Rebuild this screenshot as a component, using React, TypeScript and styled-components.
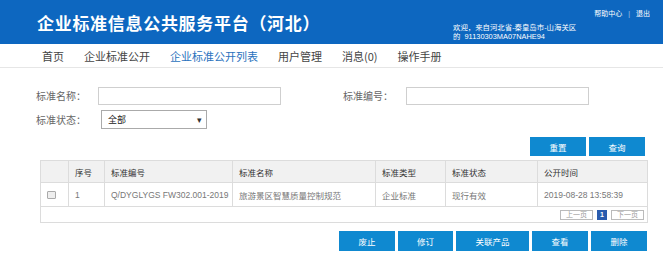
import * as React from 'react';
import styled, { createGlobalStyle } from 'styled-components';

const colors = {
  brand: '#0d67c0',
  button: '#0f89d0',
  border: '#dcdcdc',
  text: '#333',
  muted: '#777',
  active: '#2a72bd'
};

const cjk = `"Liberation Sans", "Noto Sans CJK SC", sans-serif`;

const GlobalStyle = createGlobalStyle`
  html, body {
    margin: 0;
    padding: 0;
    background: #fff;
    font-family: ${cjk};
  }
`;

const navItems = ['首页', '企业标准公开', '企业标准公开列表', '用户管理', '消息(0)', '操作手册'];

const columns = [
  { key: 'check', title: '', width: 28 },
  { key: 'no', title: '序号', width: 36 },
  { key: 'code', title: '标准编号', width: 128 },
  { key: 'name', title: '标准名称', width: 143 },
  { key: 'type', title: '标准类型', width: 70 },
  { key: 'status', title: '标准状态', width: 92 },
  { key: 'time', title: '公开时间', width: 110 }
];

const row = {
  no: '1',
  code: 'Q/DYGLYGS FW302.001-2019',
  name: '旅游景区智慧质量控制规范',
  type: '企业标准',
  status: '现行有效',
  time: '2019-08-28 13:58:39'
};

const actions = [
  { label: '废止', width: 56 },
  { label: '修订', width: 55 },
  { label: '关联产品', width: 73 },
  { label: '查看', width: 56 },
  { label: '删除', width: 56 }
];

const App: React.FC = () => (
  <Page>
    <GlobalStyle />
    <Header>
      <Title>企业标准信息公共服务平台（河北）</Title>
      <HeaderRight>
        <HelpLinks>
          <span>帮助中心</span>
          <Sep>|</Sep>
          <span>退出</span>
        </HelpLinks>
        <Welcome>
          <div>欢迎，来自河北省-秦皇岛市-山海关区</div>
          <div>的&nbsp;&nbsp;91130303MA07NAHE94</div>
        </Welcome>
      </HeaderRight>
    </Header>

    <Nav>
      {navItems.map(item => (
        <NavItem key={item} active={item === '企业标准公开列表'}>
          {item}
        </NavItem>
      ))}
    </Nav>

    <Content>
      <Form>
        <Field>
          <Label>标准名称：</Label>
          <Input />
        </Field>
        <Field>
          <Label wide>标准编号：</Label>
          <Input />
        </Field>
        <Field>
          <Label select>标准状态：</Label>
          <Select>
            <span>全部</span>
            <Caret>▾</Caret>
          </Select>
        </Field>
      </Form>

      <ButtonRow>
        <Button w={56}>重置</Button>
        <Button w={56}>查询</Button>
      </ButtonRow>

      <Table>
        <colgroup>
          {columns.map(c => (
            <col key={c.key} style={{ width: c.width }} />
          ))}
        </colgroup>
        <thead>
          <tr>
            {columns.map(c => (
              <Th key={c.key}>{c.title}</Th>
            ))}
          </tr>
        </thead>
        <tbody>
          <tr>
            <Td>
              <Checkbox />
            </Td>
            <Td>{row.no}</Td>
            <Td>{row.code}</Td>
            <Td>{row.name}</Td>
            <Td>{row.type}</Td>
            <Td>{row.status}</Td>
            <Td>{row.time}</Td>
          </tr>
          <tr>
            <PagerCell colSpan={columns.length}>
              <Pager>
                <PageBtn>上一页</PageBtn>
                <PageBtn current>1</PageBtn>
                <PageBtn>下一页</PageBtn>
              </Pager>
            </PagerCell>
          </tr>
        </tbody>
      </Table>

      <ActionRow>
        {actions.map(a => (
          <Button key={a.label} w={a.width} tall>
            {a.label}
          </Button>
        ))}
      </ActionRow>
    </Content>
  </Page>
);

export default App;

const Page = styled.div`
  width: 663px;
  height: 273px;
  overflow: hidden;
  background: #fff;
`;

const Header = styled.div`
  height: 44px;
  background: ${colors.brand};
  display: flex;
  align-items: stretch;
`;

const Title = styled.h1`
  margin: 0;
  padding-left: 37px;
  align-self: center;
  color: #fff;
  font-size: 17px;
  font-weight: 700;
  letter-spacing: 0.7px;
  font-family: "Noto Sans CJK SC", sans-serif;
`;

const HeaderRight = styled.div`
  margin-left: auto;
  width: 197px;
  margin-right: 13px;
  display: flex;
  flex-direction: column;
  padding-top: 10px;
  color: #fff;
`;

const HelpLinks = styled.div`
  display: flex;
  justify-content: flex-end;
  gap: 6px;
  font-size: 7px;
  line-height: 8px;
`;

const Sep = styled.span`
  opacity: 0.6;
`;

const Welcome = styled.div`
  margin-top: 5px;
  font-size: 7.4px;
  line-height: 9px;
`;

const Nav = styled.div`
  height: 23px;
  display: flex;
  align-items: center;
  gap: 20px;
  padding-left: 42px;
  border-bottom: 1px solid #e6e6e6;
`;

const NavItem = styled.div<{ active?: boolean }>`
  font-size: 11px;
  color: ${p => (p.active ? colors.active : '#444')};
  font-family: "Noto Sans CJK SC", sans-serif;
`;

const Content = styled.div`
  padding: 19px 16px 0 40px;
`;

const Form = styled.div`
  display: grid;
  grid-template-columns: 307px auto;
  row-gap: 5px;
  margin-left: -4px;
`;

const Field = styled.div`
  display: flex;
  align-items: center;
`;

const Label = styled.span<{ wide?: boolean; select?: boolean }>`
  flex: none;
  width: ${p => (p.select ? 65 : p.wide ? 63 : 62)}px;
  font-size: 10px;
  line-height: 14px;
  white-space: nowrap;
  color: #666;
  font-family: "Noto Sans CJK SC", sans-serif;
`;

const Input = styled.div`
  width: 183px;
  height: 18px;
  box-sizing: border-box;
  border: 1px solid #cfcfcf;
  background: #fff;
`;

const Select = styled.div`
  width: 106px;
  height: 19px;
  box-sizing: border-box;
  border: 1px solid #aaa;
  display: flex;
  align-items: center;
  justify-content: space-between;
  padding: 0 4px 0 6px;
  font-size: 9px;
  color: #222;
  font-family: "Noto Sans CJK SC", sans-serif;
`;

const Caret = styled.span`
  font-size: 9px;
  color: #333;
`;

const ButtonRow = styled.div`
  display: flex;
  justify-content: flex-end;
  gap: 3px;
  margin-top: 8px;
  padding-right: 2px;
`;

const Button = styled.div<{ w: number; tall?: boolean }>`
  width: ${p => p.w}px;
  height: ${p => (p.tall ? 20 : 19)}px;
  background: ${colors.button};
  color: #fff;
  font-size: 8.5px;
  display: flex;
  align-items: center;
  justify-content: center;
  font-family: "Noto Sans CJK SC", sans-serif;
`;

const Table = styled.table`
  margin-top: 4px;
  width: 607px;
  border-collapse: collapse;
  table-layout: fixed;
  border: 1px solid ${colors.border};
  font-size: 8.5px;
`;

const Th = styled.th`
  height: 21px;
  padding: 0 6px;
  background: #f1f1f1;
  border: 1px solid ${colors.border};
  text-align: left;
  font-weight: 400;
  color: #333;
`;

const Td = styled.td`
  height: 23px;
  padding: 0 6px;
  border: 1px solid ${colors.border};
  color: ${colors.muted};
  white-space: nowrap;
  overflow: hidden;
`;

const Checkbox = styled.div`
  width: 7px;
  height: 6px;
  border: 1px solid #aaa;
  border-radius: 1px;
  background: #eee;
`;

const PagerCell = styled.td`
  height: 15px;
  padding: 0 3px 0 0;
  border: 1px solid ${colors.border};
  border-left: none;
  border-right: none;
`;

const Pager = styled.div`
  display: flex;
  justify-content: flex-end;
  gap: 4px;
`;

const PageBtn = styled.div<{ current?: boolean }>`
  height: 10px;
  min-width: 10px;
  padding: 0 ${p => (p.current ? 0 : 5)}px;
  box-sizing: border-box;
  border: 1px solid ${p => (p.current ? '#2a5cae' : '#bbb')};
  background: ${p => (p.current ? '#2a5cae' : '#fff')};
  color: ${p => (p.current ? '#fff' : '#999')};
  font-size: 7px;
  line-height: 8px;
  text-align: center;
  font-weight: ${p => (p.current ? 700 : 400)};
`;

const ActionRow = styled.div`
  display: flex;
  justify-content: flex-end;
  gap: 3px;
  margin-top: 8px;
`;
